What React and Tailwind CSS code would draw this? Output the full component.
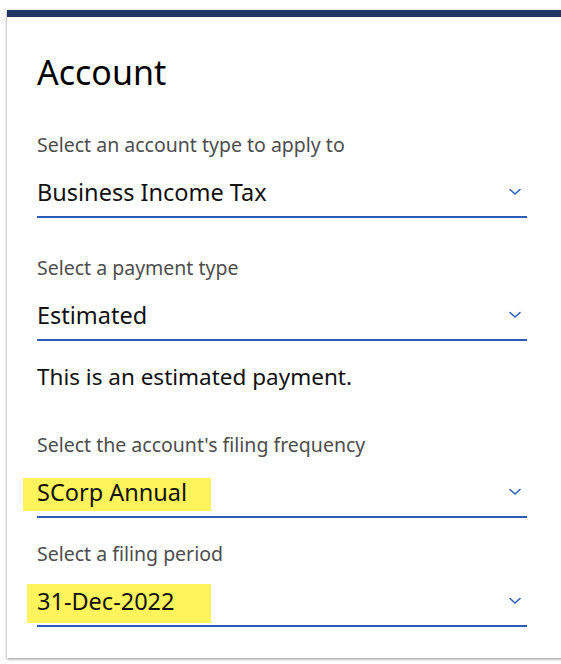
import React from "react";

function Chevron() {
  return (
    <svg width="12" height="8" viewBox="0 0 12 8" className="shrink-0">
      <path d="M1 1.5 L6 6 L11 1.5" fill="none" stroke="#2b5fb8" strokeWidth="1.6" strokeLinecap="round" strokeLinejoin="round" />
    </svg>
  );
}

function Field({ label, value, highlight, hlClass, className }) {
  return (
    <div className={className}>
      <div className="h-[28px] leading-[28px] text-[19.5px] text-[#4d4d4d]">{label}</div>
      <div className="relative mt-[15px] flex items-center justify-between border-b-2 border-[#2b5cb5] pb-[6px] pr-[6px]">
        {highlight && <span className={"absolute bg-[#fff45c] " + hlClass} />}
        <span className="relative h-[36px] leading-[36px] text-[23.5px] text-[#111]">{value}</span>
        <Chevron />
      </div>
    </div>
  );
}

export default function App() {
  return (
    <div className="w-[561px] h-[664px] overflow-hidden bg-white" style={{ fontFamily: '"Noto Sans", "Open Sans", sans-serif' }}>
      <div className="ml-[7px] mt-[10px] w-[570px] bg-white shadow-[0_1px_3px_rgba(0,0,0,0.45)]">
        <div className="h-[7px] bg-[#1f3864]" />
        <div className="pl-[30px] pr-[50px] pt-[35px] pb-[31px]">
          <h1 className="h-[40px] leading-[40px] text-[34px] font-normal text-black">Account</h1>
          <Field className="mt-[39px]" label="Select an account type to apply to" value="Business Income Tax" />
          <Field className="mt-[36px]" label="Select a payment type" value="Estimated" />
          <p className="mt-[22px] h-[28px] leading-[28px] text-[22.5px] text-[#111]">This is an estimated payment.</p>
          <Field
            className="mt-[40px]"
            label="Select the account's filing frequency"
            value="SCorp Annual"
            highlight
            hlClass="left-[-14px] top-[4px] w-[188px] h-[33px]"
          />
          <Field
            className="mt-[22px]"
            label="Select a filing period"
            value="31-Dec-2022"
            highlight
            hlClass="left-[-10px] top-[1px] w-[184px] h-[39px]"
          />
        </div>
      </div>
    </div>
  );
}
